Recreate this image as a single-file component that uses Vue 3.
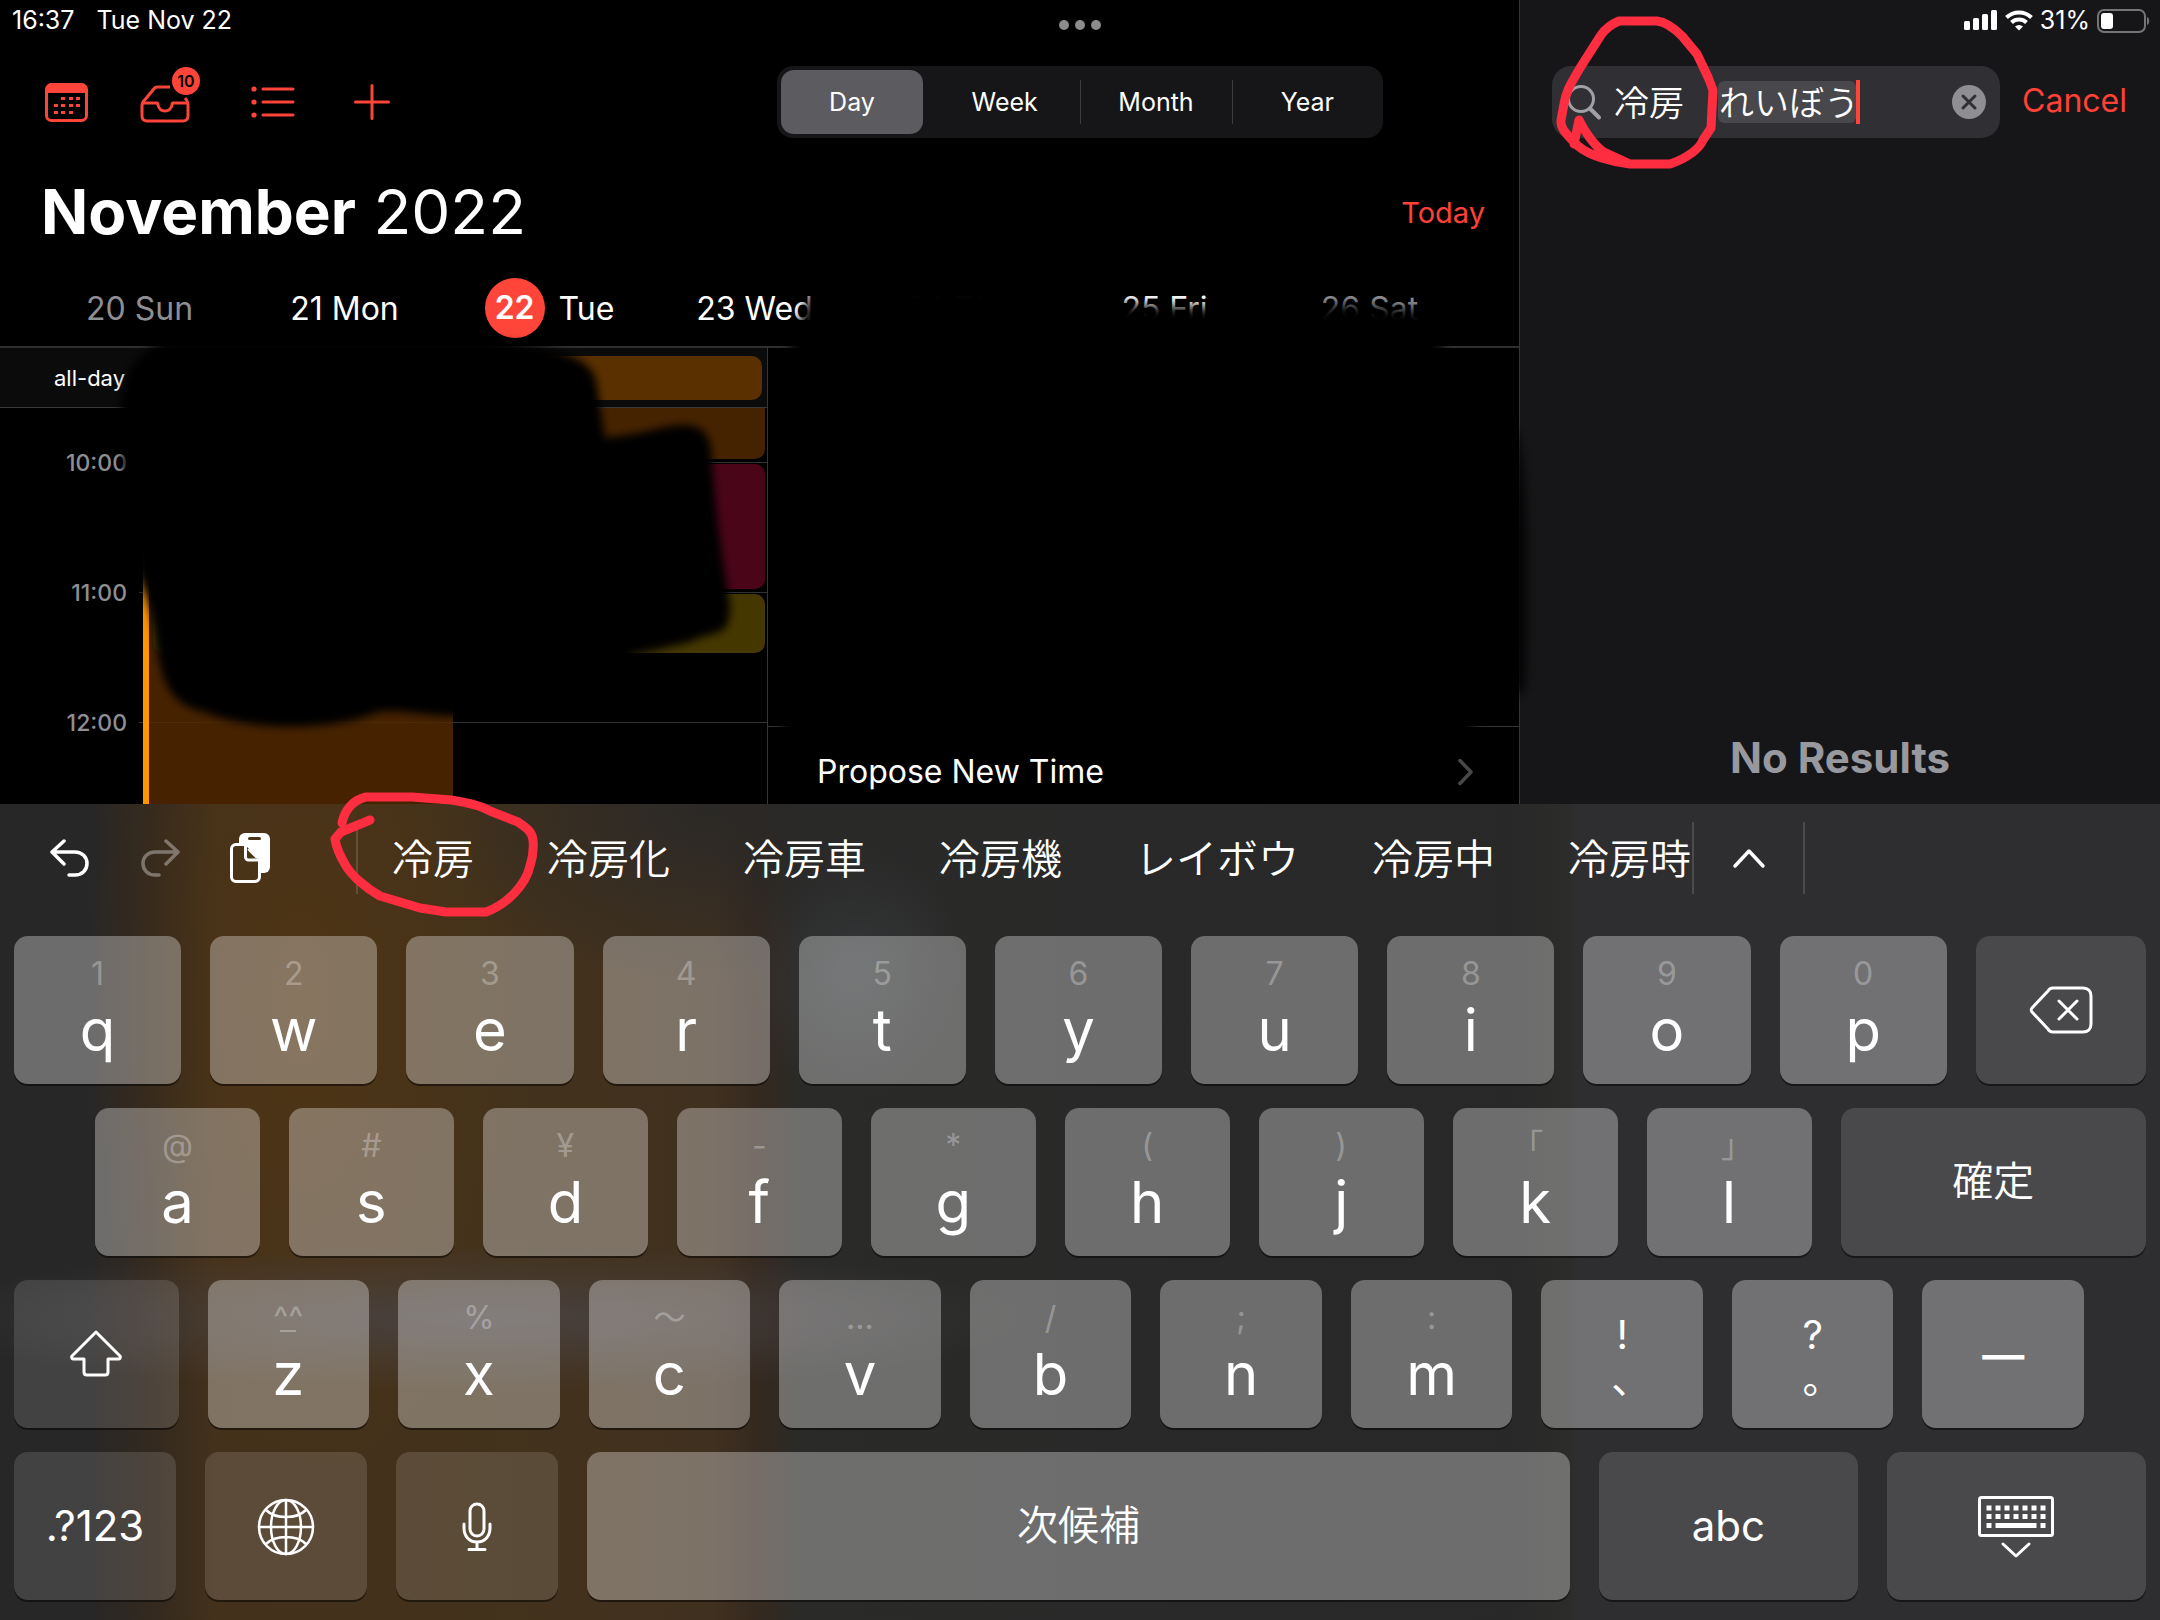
<script setup>
import { ref } from 'vue'

const views = ['Day', 'Week', 'Month', 'Year']
const activeView = ref('Day')
const query = ref('冷房　れいぼう')

const days = [
  { num: '20', name: 'Sun', weekend: true },
  { num: '21', name: 'Mon' },
  { num: '22', name: 'Tue', selected: true },
  { num: '23', name: 'Wed' },
  { num: '24', name: 'Thu' },
  { num: '25', name: 'Fri' },
  { num: '26', name: 'Sat', weekend: true },
]

const hours = ['10:00', '11:00', '12:00']
const events = [
  { color: '#462300', top: -20, height: 71 },
  { color: '#4a0519', top: 56, height: 125 },
  { color: '#453700', top: 186, height: 59 },
]

const candidates = ['冷房', '冷房化', '冷房車', '冷房機', 'レイボウ', '冷房中', '冷房時']

const pair = (hints, letters) => letters.map((main, i) => ({ main, hint: hints[i] }))
const rowOne = pair([...'1234567890'], [...'qwertyuiop'])
const rowTwo = pair([...'@#¥-*()｢｣'], [...'asdfghjkl'])
const rowThree = pair(['^^', '%', '〜', '…', '/', ';', ':'], [...'zxcvbnm'])
</script>

<template>
  <div class="screen">
    <div class="top">
      <main class="calendar">
        <div class="status">
          <span>16:37</span>
          <span>Tue Nov 22</span>
        </div>

        <div class="toolbar">
          <div class="tools">
            <button class="tool" aria-label="Calendar">
              <svg width="43" height="72" viewBox="0 0 43 72">
                <rect x="1.5" y="18.5" width="40" height="36" rx="5" fill="none" stroke="currentColor" stroke-width="3" />
                <path d="M1 27v-4a6 6 0 0 1 6-6h29a6 6 0 0 1 6 6v4z" fill="currentColor" />
                <g fill="currentColor">
                  <rect x="16" y="31" width="4" height="3" /><rect x="24" y="31" width="4" height="3" /><rect x="31" y="31" width="4" height="3" />
                  <rect x="9" y="38" width="4" height="3" /><rect x="16" y="38" width="4" height="3" /><rect x="24" y="38" width="4" height="3" /><rect x="31" y="38" width="4" height="3" />
                  <rect x="9" y="45" width="4" height="3" /><rect x="16" y="45" width="4" height="3" /><rect x="24" y="45" width="4" height="3" />
                </g>
              </svg>
            </button>
            <button class="tool" aria-label="Inbox">
              <svg width="59" height="72" viewBox="0 0 59 72" fill="none" stroke="currentColor" stroke-width="3" stroke-linejoin="round">
                <path d="M30 21H18c-2 0-4 1-5 3L3 36c-1 1-1 2-1 4v10c0 3 2 5 5 5h36c3 0 5-2 5-5V38c0-3-1-4-3-6" />
                <path d="M2 37h15c1 0 1 1 1 2 1 4 3 6 7 6s6-2 7-6c0-1 0-2 1-2h15" />
              </svg>
              <span class="count">10</span>
            </button>
            <button class="tool" aria-label="List">
              <svg width="51" height="72" viewBox="0 0 51 72">
                <g fill="currentColor"><circle cx="3" cy="23" r="2.6" /><circle cx="3" cy="36" r="2.6" /><circle cx="3" cy="49" r="2.6" /></g>
                <path d="M12 23h30M12 36h30M12 49h30" stroke="currentColor" stroke-width="3" stroke-linecap="round" />
              </svg>
            </button>
            <button class="tool" aria-label="Add">
              <svg width="36" height="72" viewBox="0 0 36 72">
                <path d="M1.5 36h33M18 19.500v33" stroke="currentColor" stroke-width="3" stroke-linecap="round" />
              </svg>
            </button>
          </div>
          <div class="segments">
            <button
              v-for="view in views"
              :key="view"
              class="segment"
              :class="{ active: view === activeView }"
              @click="activeView = view"
            >{{ view }}</button>
          </div>
        </div>

        <div class="month">
          <h1><b>November</b> 2022</h1>
          <button class="link">Today</button>
        </div>

        <div class="days">
          <button v-for="day in days" :key="day.num" class="day" :class="{ weekend: day.weekend, selected: day.selected }">
            <span class="num">{{ day.num }}</span>
            <span>{{ day.name }}</span>
          </button>
        </div>

        <div class="panes">
          <section class="dayview">
            <div class="allday">
              <span class="allday-label">all-day</span>
              <div class="allday-event"></div>
            </div>
            <div class="timeline">
              <div v-for="hour in hours" :key="hour" class="hour">
                <span class="hour-label">{{ hour }}</span>
                <span class="hour-line"></span>
              </div>
              <div class="long-event"></div>
              <div
                v-for="event in events"
                :key="event.top"
                class="event"
                :style="{ top: event.top + 'px', height: event.height + 'px', background: event.color }"
              ></div>
            </div>
          </section>
          <section class="detail">
            <button class="propose">
              <span>Propose New Time</span>
              <svg width="16" height="28" viewBox="0 0 16 28"><path d="M2 2.500 13 14 2 25.500" fill="none" stroke="#48484a" stroke-width="3.500" stroke-linecap="round" stroke-linejoin="round" /></svg>
            </button>
          </section>
        </div>
      </main>

      <aside class="search">
        <div class="status status-right">
          <svg width="34" height="24" viewBox="0 0 34 24" fill="#fff">
            <rect x="0" y="13" width="6" height="9" rx="1.500" /><rect x="9" y="10" width="6" height="12" rx="1.500" />
            <rect x="18" y="6" width="6" height="16" rx="1.500" /><rect x="27" y="2" width="6" height="20" rx="1.500" />
          </svg>
          <svg width="28" height="24" viewBox="0 0 28 24" fill="none" stroke="#fff" stroke-width="4">
            <path d="M1.500 9.500a18 18 0 0 1 25 0" /><path d="M6.500 14.500a11 11 0 0 1 15 0" />
            <path d="M10 18.500a6 6 0 0 1 8 0l-4 4z" fill="#fff" stroke="none" />
          </svg>
          <span>31%</span>
          <svg width="54" height="26" viewBox="0 0 54 26">
            <rect x="1" y="2" width="47" height="22" rx="6" fill="none" stroke="#757577" stroke-width="2" />
            <rect x="4" y="5" width="12" height="16" rx="3" fill="#fff" />
            <path d="M50 9c3 1 3 7 0 8z" fill="#757577" />
          </svg>
        </div>
        <div class="searchbar">
          <div class="field">
            <svg width="36" height="40" viewBox="0 0 36 40" fill="none" stroke="#a0a0a6" stroke-linecap="round">
              <circle cx="15" cy="17" r="12.500" stroke-width="3" /><path d="m24 26.500 9 9" stroke-width="4" />
            </svg>
            <div class="entry">
              <span class="marked"></span>
              <input v-model="query" type="text" aria-label="Search" />
              <span class="caret"></span>
            </div>
            <button class="clear" aria-label="Clear">
              <svg width="34" height="34" viewBox="0 0 34 34"><circle cx="17" cy="17" r="17" fill="#8e8e93" /><path d="m11 11 12 12M23 11 11 23" stroke="#302f34" stroke-width="3" stroke-linecap="round" /></svg>
            </button>
          </div>
          <button class="link cancel">Cancel</button>
        </div>
        <p class="empty">No Results</p>
      </aside>
      <span class="dots"><i></i><i></i><i></i></span>
    </div>

    <section class="keyboard">
      <div class="assist">
        <div class="edit">
          <button aria-label="Undo">
            <svg width="40" height="40" viewBox="0 0 40 40" fill="none" stroke="#fff" stroke-width="3.500" stroke-linecap="round" stroke-linejoin="round"><path d="M14 3 2 14l12 12M2 14h23c7 0 12 5 12 11.500S32 37 25 37h-6" /></svg>
          </button>
          <button class="faded" aria-label="Redo">
            <svg width="40" height="40" viewBox="0 0 40 40" fill="none" stroke="#fff" stroke-width="3.500" stroke-linecap="round" stroke-linejoin="round"><path d="m26 3 12 11-12 12M38 14H15C8 14 3 19 3 25.500S8 37 15 37h4" /></svg>
          </button>
          <button aria-label="Paste">
            <svg width="40" height="52" viewBox="0 0 40 52">
              <path d="M15 1h19a6 6 0 0 1 6 6v28a6 6 0 0 1-6 6H15a6 6 0 0 1-6-6V7a6 6 0 0 1 6-6z" fill="#fff" />
              <rect x="18" y="5" width="13" height="3" rx="1.500" fill="#4a3418" />
              <path d="M6 12.500h9c2 0 3 1 5 3l7 8c2 2 2.500 3 2.500 5V45a4.500 4.500 0 0 1-4.500 4.500H6A4.500 4.500 0 0 1 1.500 45V17A4.500 4.500 0 0 1 6 12.500z" fill="#4a3418" stroke="#fff" stroke-width="3" />
              <path d="M15.500 13v12a3 3 0 0 0 3 3H29" fill="none" stroke="#fff" stroke-width="3" />
              <path d="m18 17 9 9" stroke="#fff" stroke-width="2" />
            </svg>
          </button>
        </div>
        <span class="rule"></span>
        <div class="candidates">
          <button v-for="word in candidates" :key="word">{{ word }}</button>
        </div>
        <span class="rule"></span>
        <button class="more" aria-label="More candidates">
          <svg width="34" height="22" viewBox="0 0 34 22"><path d="M3 19 17 4l14 15" fill="none" stroke="#fff" stroke-width="3.500" stroke-linecap="round" stroke-linejoin="round" /></svg>
        </button>
        <span class="rule"></span>
        <div class="spare"></div>
      </div>

      <div class="row">
        <button v-for="k in rowOne" :key="k.main" class="key"><span class="hint">{{ k.hint }}</span><span class="main">{{ k.main }}</span></button>
        <button class="key dark side" aria-label="Delete">
          <svg width="64" height="50" viewBox="0 0 64 50" fill="none" stroke="#fff" stroke-width="3" stroke-linecap="round" stroke-linejoin="round"><path d="M24 3h30c5 0 8 3 8 8v28c0 5-3 8-8 8H24c-2 0-4-1-5-3L3 27c-1-1-1-3 0-4L19 6c1-2 3-3 5-3z" /><path d="m30 16 18 18M48 16 30 34" /></svg>
        </button>
      </div>

      <div class="row second">
        <button v-for="k in rowTwo" :key="k.main" class="key"><span class="hint">{{ k.hint }}</span><span class="main">{{ k.main }}</span></button>
        <button class="key dark enter kanji">確定</button>
      </div>

      <div class="row third">
        <button class="key dark side" aria-label="Shift">
          <svg width="54" height="50" viewBox="0 0 54 50" fill="none" stroke="#fff" stroke-width="3" stroke-linejoin="round"><path d="M27 3 3 27c-1 1 0 3 1 3h11v13c0 2 1 3 3 3h18c2 0 3-1 3-3V30h11c1 0 2-2 1-3z" /></svg>
        </button>
        <button v-for="k in rowThree" :key="k.main" class="key">
          <span class="hint" :class="{ face: k.hint === '^^' }">{{ k.hint }}</span>
          <span class="main">{{ k.main }}</span>
        </button>
        <button class="key double"><span>!</span><span>､</span></button>
        <button class="key double"><span>?</span><span>｡</span></button>
        <button class="key dash">—</button>
      </div>

      <div class="row fourth">
        <button class="key dark word">.?123</button>
        <button class="key dark" aria-label="Next keyboard">
          <svg width="60" height="60" viewBox="0 0 60 60" fill="none" stroke="#fff" stroke-width="2.500"><circle cx="30" cy="31" r="27" /><ellipse cx="30" cy="31" rx="15" ry="27" /><path d="M30 4v54M3 31h54M10 14c5 5 12 7 20 7s15-2 20-7M10 48c5-5 12-7 20-7s15 2 20 7" /></svg>
        </button>
        <button class="key dark" aria-label="Dictation">
          <svg width="32" height="52" viewBox="0 0 32 52" fill="none" stroke="#fff" stroke-width="3" stroke-linecap="round"><rect x="9" y="4" width="14" height="32" rx="7" /><path d="M3 24v4c0 8 5 14 13 14s13-6 13-14v-4M16 42v7M8 49.500h16" /></svg>
        </button>
        <button class="key space kanji">次候補</button>
        <button class="key dark wide word">abc</button>
        <button class="key dark wide" aria-label="Hide keyboard">
          <svg width="76" height="64" viewBox="0 0 76 64" fill="none" stroke="#fff" stroke-width="3">
            <rect x="1.500" y="3.500" width="73" height="38" rx="2" />
            <path d="M8.500 14h60M8.500 22.500h60" stroke-width="5" stroke-dasharray="5 4" />
            <path d="M8.500 31.500h5M17.500 31.500h41M62.500 31.500h5" stroke-width="5" />
            <path d="m25 50 13 12 13-12" stroke-linecap="round" stroke-linejoin="round" />
          </svg>
        </button>
      </div>
    </section>

    <svg class="ink" viewBox="0 0 2160 1620" aria-hidden="true">
      <defs>
        <filter id="soft" x="-5%" y="-5%" width="110%" height="110%"><feGaussianBlur stdDeviation="4" /></filter>
        <filter id="softer" x="-5%" y="-5%" width="110%" height="110%"><feGaussianBlur stdDeviation="6" /></filter>
      </defs>
      <path filter="url(#soft)" d="M122 425 C118 390 126 352 170 340 H490 C545 348 588 352 596 380 L605 438 L640 433 C670 426 706 414 711 448 C714 500 722 560 730 604 C730 640 718 628 690 642 L630 656 V716 H453 C420 716 390 706 370 715 C330 730 250 732 205 712 C170 706 162 680 157 650 C154 620 148 600 136 572 L130 490 L124 470z" />
      <path filter="url(#softer)" d="M814 285 H1035 C1060 299 1090 306 1120 304 L1230 308 C1270 318 1300 314 1340 304 L1440 312 L1444 400 L1512 425 C1526 440 1528 560 1524 690 L1474 716 L1470 745 H782 V400 L792 340z" />
      <g fill="none" stroke="#ff2d40" stroke-width="9" stroke-linecap="round" stroke-linejoin="round">
        <path d="M1574 144 1579 120C1584 130 1594 146 1604 152L1630 164H1670C1688 158 1700 148 1703 140L1711 128 1713 90 1708 77 1697 54 1682 36C1674 28 1666 22 1657 21H1619C1612 24 1606 28 1601 35L1580 68C1572 82 1566 90 1564 104L1561 120C1560 128 1566 134 1578 146 1590 156 1612 162 1630 164" />
        <path d="M342 823C344 812 352 800 366 797H412L451 800C470 803 482 806 490 811L518 822C528 829 532 832 533 840 534 850 532 860 530 866 526 884 508 904 486 912H446L420 908 380 896C366 888 352 876 346 866 340 856 336 846 335 839L341 832 370 820" />
      </g>
    </svg>
  </div>
</template>

<style>
html,
body {
  margin: 0;
  background: #000;
}
</style>

<style scoped>
.screen {
  position: relative;
  display: flex;
  flex-direction: column;
  height: 100vh;
  overflow: hidden;
  background: #000;
  color: #fff;
  font-family: Inter, "Noto Sans CJK JP", sans-serif;
}
button {
  margin: 0;
  padding: 0;
  border: 0;
  background: none;
  color: inherit;
  font: inherit;
}
svg {
  display: block;
  flex: none;
}
.top {
  position: relative;
  display: flex;
  flex: 1;
  min-height: 0;
}
.dots {
  position: absolute;
  top: 20px;
  left: 50%;
  display: flex;
  gap: 6px;
  margin-left: -21px;
}
.dots i {
  width: 10px;
  height: 10px;
  border-radius: 50%;
  background: #8c8c8c;
}
.calendar {
  display: flex;
  flex: 1519;
  flex-direction: column;
  min-width: 0;
  border-right: 1px solid #363638;
}
.status {
  display: flex;
  gap: 22px;
  height: 61px;
  padding: 5px 12px 0;
  font-size: 25px;
  line-height: 30px;
}
.status-right {
  justify-content: flex-end;
  gap: 7px;
  padding-right: 9px;
}
.status-right svg {
  margin-top: 3px;
}
.toolbar {
  display: flex;
  justify-content: space-between;
  padding: 0 136px 0 45px;
}
.tools {
  display: flex;
  gap: 52px;
  color: #ff4539;
}
.tool {
  position: relative;
}
.count {
  position: absolute;
  top: 1px;
  right: -1px;
  width: 28px;
  height: 28px;
  border-radius: 50%;
  background: #ff4539;
  color: #000;
  font-size: 16px;
  font-weight: 600;
  line-height: 28px;
  text-align: center;
}
.segments {
  display: flex;
  width: 606px;
  height: 72px;
  box-sizing: border-box;
  padding: 4px 0 4px 4px;
  border-radius: 16px;
  background: #161618;
}
.segment {
  position: relative;
  flex: 1;
  border-radius: 13px;
  font-size: 25px;
}
.segment.active {
  flex: 0 0 142px;
  margin-right: 6px;
  background: #5c5b60;
}
.segment:nth-child(n + 3)::before {
  position: absolute;
  top: 10px;
  left: 0;
  width: 1px;
  height: 44px;
  background: #3c3b41;
  content: "";
}
.month {
  display: flex;
  align-items: center;
  justify-content: space-between;
  padding: 36px 34px 28px 41px;
}
h1 {
  margin: 0;
  font-size: 62px;
  font-weight: 400;
  line-height: 76px;
}
.link {
  color: #ff4136;
  font-size: 29px;
}
.days {
  display: flex;
  height: 60px;
  padding: 0 47px 8px 37px;
}
.day {
  display: flex;
  flex: 1;
  align-items: center;
  justify-content: center;
  gap: 9px;
  font-size: 32px;
}
.day.weekend {
  color: #8e8e93;
}
.day.selected {
  gap: 14px;
}
.selected .num {
  width: 60px;
  border-radius: 50%;
  background: #ff4539;
  font-weight: 600;
  line-height: 60px;
}
.panes {
  display: flex;
  flex: 1;
  min-height: 0;
  border-top: 2px solid #2f2f31;
}
.dayview {
  display: flex;
  flex: 767;
  flex-direction: column;
  border-right: 1px solid #363638;
}
.allday {
  display: flex;
  align-items: center;
  gap: 20px;
  height: 59px;
  padding: 0 5px 0 54px;
  border-bottom: 1px solid #3a3a3c;
  background: #0b0b0b;
  font-size: 22px;
}
.allday-event {
  flex: 1;
  height: 44px;
  border-radius: 10px;
  background: #5a3000;
}
.timeline {
  position: relative;
  flex: 1;
  min-height: 0;
  padding-top: 40px;
  overflow: hidden;
}
.hour {
  display: flex;
  align-items: center;
  gap: 12px;
  height: 28px;
  margin-bottom: 102px;
}
.hour-label {
  width: 127px;
  padding-top: 2px;
  color: #8e8e93;
  font-size: 23px;
  font-weight: 500;
  line-height: 30px;
  text-align: right;
}
.hour-line {
  flex: 1;
  height: 1px;
  background: #333335;
}
.long-event {
  position: absolute;
  top: 0;
  bottom: 0;
  left: 143px;
  width: 304px;
  border-left: 6px solid #ff9500;
  background: rgba(84, 41, 0, 0.84);
}
.event {
  position: absolute;
  right: 2px;
  left: 153px;
  border-radius: 10px;
}
.detail {
  display: flex;
  flex: 751;
  align-items: flex-end;
}
.propose {
  display: flex;
  flex: 1;
  align-items: center;
  justify-content: space-between;
  height: 78px;
  padding: 12px 45px 0 49px;
  border-top: 1px solid #363638;
  font-size: 32px;
}
.search {
  flex: 640;
  min-width: 0;
  background: #161618;
}
.searchbar {
  display: flex;
  gap: 22px;
  padding: 0 33px 0 32px;
}
.field {
  display: flex;
  flex: 1;
  align-items: center;
  gap: 12px;
  min-width: 0;
  height: 72px;
  box-sizing: border-box;
  padding: 0 14px;
  border-radius: 19px;
  background: #302f34;
}
.entry {
  position: relative;
  flex: 1;
  min-width: 0;
}
.entry input {
  position: relative;
  display: block;
  width: 100%;
  height: 44px;
  box-sizing: border-box;
  padding: 0 0 4px;
  border: 0;
  outline: 0;
  background: none;
  color: #fff;
  font-family: "Noto Sans CJK JP", sans-serif;
  font-size: 35px;
  font-weight: 350;
}
.marked {
  position: absolute;
  top: 1px;
  left: 104px;
  width: 138px;
  height: 42px;
  border-radius: 6px;
  background: #47474c;
}
.caret {
  position: absolute;
  top: 0;
  left: 242px;
  width: 4px;
  height: 44px;
  background: #ff4539;
}
.cancel {
  padding-bottom: 4px;
  font-size: 32px;
}
.empty {
  margin: 594px 0 0;
  color: #98989f;
  font-size: 42px;
  font-weight: 700;
  line-height: 52px;
  text-align: center;
}
.keyboard {
  display: flex;
  flex-direction: column;
  gap: 24px;
  padding: 0 14px 20px;
  background:
    radial-gradient(ellipse 26% 9% at 22% 63%, rgba(74, 68, 70, 0.85), rgba(74, 68, 70, 0) 100%),
    radial-gradient(ellipse 10% 60% at 14% 24%, rgba(92, 56, 14, 0.45), rgba(92, 56, 14, 0) 100%),
    radial-gradient(ellipse 14% 22% at 33% 0%, rgba(40, 40, 40, 0.9), rgba(40, 40, 40, 0) 100%),
    radial-gradient(ellipse 5% 16% at 39.500% 20%, rgba(70, 75, 82, 0.4), rgba(70, 75, 82, 0) 100%),
    linear-gradient(90deg, #272728 0, #272727 4%, #33291f 7%, #43311b 10%, #43321b 22%, #40301f 33%, #35291f 35%, #2a2a28 37%, #292929 52%, #282828 70%, #2c2c2b 72.700%, #2e2e31 73%, #2e2e31 100%);
}
.assist {
  display: flex;
  align-items: center;
  height: 108px;
  margin: 0 -14px;
}
.edit {
  display: flex;
  align-items: center;
  gap: 50px;
  padding: 0 86px 0 50px;
}
.faded {
  opacity: 0.35;
}
.rule {
  width: 2px;
  height: 72px;
  background: rgba(255, 255, 255, 0.14);
}
.candidates {
  display: flex;
  flex: 1301;
  gap: 73px;
  padding: 0 0 4px 34px;
  overflow: hidden;
  font-family: "Noto Sans CJK JP", sans-serif;
  font-size: 41px;
  font-weight: 350;
  line-height: 60px;
  white-space: nowrap;
}
.more {
  display: flex;
  flex: 109;
  justify-content: center;
}
.spare {
  flex: 355;
}
.row {
  display: flex;
  gap: 29px;
  height: 148px;
}
.second {
  padding-left: 81px;
}
.third {
  padding-right: 62px;
}
.key {
  position: relative;
  display: flex;
  flex: 162 1 0;
  flex-direction: column;
  align-items: center;
  gap: 2px;
  min-width: 0;
  padding-top: 16px;
  border-radius: 14px;
  background: rgba(255, 255, 255, 0.32);
  box-shadow: 0 2px 0 rgba(0, 0, 0, 0.5);
}
.key.dark {
  justify-content: center;
  padding: 0;
  background: rgba(255, 255, 255, 0.13);
}
.key.side {
  flex-grow: 165;
}
.key.enter {
  flex-grow: 300;
}
.key.space {
  flex-grow: 982;
}
.key.wide {
  flex-grow: 259;
}
.hint {
  position: relative;
  height: 44px;
  color: rgba(255, 255, 255, 0.3);
  font-size: 32px;
  line-height: 44px;
}
.face::after {
  position: absolute;
  bottom: 8px;
  left: 50%;
  width: 16px;
  height: 2px;
  margin-left: -8px;
  background: currentColor;
  content: "";
}
.main {
  font-size: 58px;
  line-height: 64px;
}
.key.kanji {
  justify-content: center;
  padding: 0 0 8px;
  font-family: "Noto Sans CJK JP", sans-serif;
  font-size: 41px;
  font-weight: 350;
}
.key.word {
  padding-bottom: 2px;
  font-size: 42px;
}
.double {
  gap: 0;
  padding-top: 33px;
  font-size: 40px;
  line-height: 44px;
}
.double span {
  height: 44px;
}
.key.dash {
  justify-content: center;
  padding: 0;
  font-size: 42px;
  font-weight: 600;
}
.ink {
  position: absolute;
  top: 0;
  left: 0;
  width: 100%;
  pointer-events: none;
}
</style>
